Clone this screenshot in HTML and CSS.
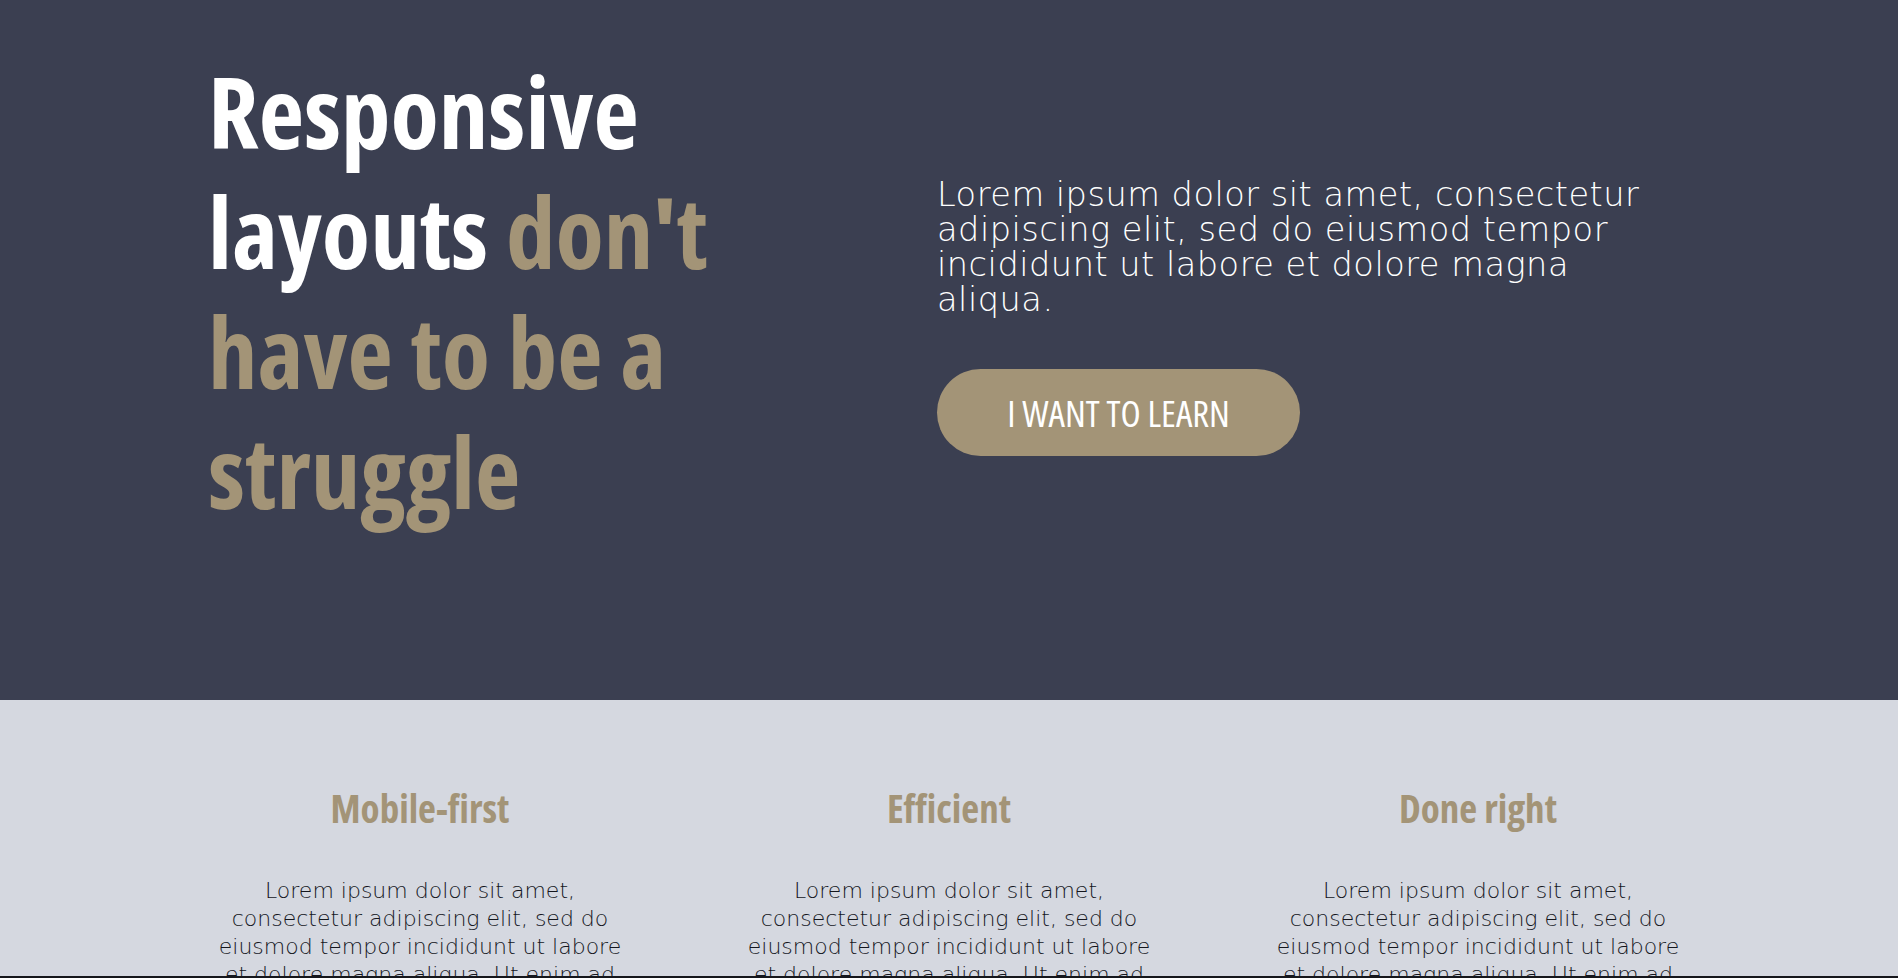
FILE: index.html
```html
<!DOCTYPE html>
<html lang="en">
<head>
<meta charset="utf-8">
<title>Responsive layouts</title>
<link rel="stylesheet" href="styles.css">
</head>
<body>
<header class="hero">
  <div class="container hero-grid">
    <h1 class="hero-title">Responsive layouts <span class="accent">don't have to be a struggle</span></h1>
    <div class="hero-content">
      <p class="hero-text">Lorem ipsum dolor sit amet, consectetur adipiscing elit, sed do eiusmod tempor incididunt ut labore et dolore magna aliqua.</p>
      <a class="btn" href="#">I want to learn</a>
    </div>
  </div>
</header>
<main class="features">
  <div class="container features-grid">
    <section class="feature">
      <h2 class="feature-title">Mobile-first</h2>
      <p class="feature-text">Lorem ipsum dolor sit amet, consectetur adipiscing elit, sed do eiusmod tempor incididunt ut labore et dolore magna aliqua. Ut enim ad minim veniam, quis nostrud exercitation ullamco laboris nisi ut aliquip ex ea commodo consequat.</p>
    </section>
    <section class="feature">
      <h2 class="feature-title">Efficient</h2>
      <p class="feature-text">Lorem ipsum dolor sit amet, consectetur adipiscing elit, sed do eiusmod tempor incididunt ut labore et dolore magna aliqua. Ut enim ad minim veniam, quis nostrud exercitation ullamco laboris nisi ut aliquip ex ea commodo consequat.</p>
    </section>
    <section class="feature">
      <h2 class="feature-title">Done right</h2>
      <p class="feature-text">Lorem ipsum dolor sit amet, consectetur adipiscing elit, sed do eiusmod tempor incididunt ut labore et dolore magna aliqua. Ut enim ad minim veniam, quis nostrud exercitation ullamco laboris nisi ut aliquip ex ea commodo consequat.</p>
    </section>
  </div>
</main>
<div class="bottom-edge"></div>
</body>
</html>
```
FILE: styles.css
```css
* { box-sizing: border-box; }

body {
  margin: 0;
  font-family: "DejaVu Sans", "Open Sans", sans-serif;
  font-weight: 200;
  background: #d5d8e0;
}

.container {
  width: 1482px;
  margin: 0 auto;
}

/* Hero */
.hero {
  background: #3b3f51;
  color: #fff;
  padding: 51px 0 169px;
}

.hero-grid {
  display: grid;
  grid-template-columns: 600px 1fr;
  column-gap: 129px;
  align-items: start;
}

.hero-title {
  margin: 0;
  font-family: "Open Sans", sans-serif;
  font-stretch: 75%;
  font-weight: 700;
  font-size: 99px;
  line-height: 120px;
  color: #fff;
}

.accent { color: #a39477; }

.hero-content {
  padding-top: 126px;
  display: flex;
  flex-direction: column;
  align-items: flex-start;
}

.hero-text {
  margin: 0 0 52px;
  font-size: 33.6px;
  line-height: 35px;
  letter-spacing: 0.5px;
  max-width: 740px;
}

.btn {
  display: inline-flex;
  align-items: center;
  justify-content: center;
  height: 87px;
  width: 363px;
  border-radius: 44px;
  background: #a39477;
  color: #fff;
  text-decoration: none;
  text-transform: uppercase;
  font-family: "Open Sans", sans-serif;
  font-stretch: 75%;
  font-weight: 400;
  font-size: 37px;
}

/* Features */
.features {
  background: #d5d8e0;
  padding: 82px 0 80px;
}

.features-grid {
  display: grid;
  grid-template-columns: repeat(3, 1fr);
  column-gap: 105px;
}

.feature { text-align: center; }

.feature-title {
  margin: 0 0 43px;
  font-family: "Open Sans", sans-serif;
  font-stretch: 75%;
  font-weight: 700;
  font-size: 39px;
  line-height: 52px;
  color: #a39477;
}

.feature-text {
  margin: 0;
  font-size: 22px;
  line-height: 28px;
  color: #14161d;
}

.bottom-edge {
  position: fixed;
  left: 0;
  right: 0;
  bottom: 0;
  height: 2px;
  background: #16171c;
}
```
